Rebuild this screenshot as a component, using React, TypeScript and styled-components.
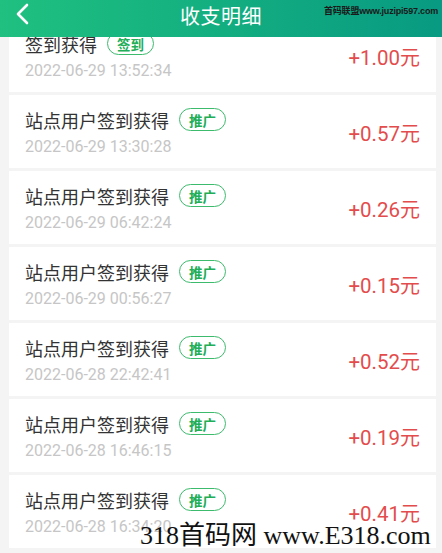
import React from 'react';
import styled, { createGlobalStyle } from 'styled-components';

const GlobalStyle = createGlobalStyle`
  html, body {
    margin: 0;
    padding: 0;
    background: #f4f4f4;
    font-family: Roboto, "Noto Sans CJK SC", sans-serif;
  }
`;

const Page = styled.div`
  position: relative;
  width: 442px;
  height: 553px;
  overflow: hidden;
  background: #f4f4f4;
`;

const Header = styled.header`
  position: absolute;
  top: 0;
  left: 0;
  right: 0;
  z-index: 2;
  height: 37px;
  display: flex;
  align-items: center;
  justify-content: center;
  padding-bottom: 7px;
  box-sizing: border-box;
  background: linear-gradient(90deg, #1fc080 0%, #13ae80 50%, #089a82 100%);
`;

const BackButton = styled.div`
  position: absolute;
  left: 14px;
  top: 3px;
  width: 18px;
  height: 22px;
`;

const Title = styled.h1`
  margin: 0;
  color: #fff;
  font-size: 20px;
  font-weight: 400;
  letter-spacing: 0.5px;
  font-family: "Noto Sans CJK SC", sans-serif;
`;

const TopMark = styled.div`
  position: absolute;
  right: 4px;
  top: 4px;
  font-size: 9px;
  color: #1a1a1a;
  font-family: "Liberation Sans", "Noto Sans CJK SC", sans-serif;
  letter-spacing: -0.2px;
  font-weight: 700;
`;

const List = styled.div`
  display: flex;
  flex-direction: column;
  gap: 3px;
  padding: 19px 6px 0 9px;
`;

const Card = styled.div`
  height: 73px;
  box-sizing: border-box;
  background: #fff;
  display: flex;
  justify-content: space-between;
  padding: 13px 16px 0 16px;
`;

const Info = styled.div`
  display: flex;
  flex-direction: column;
`;

const NameRow = styled.div`
  display: flex;
  align-items: center;
  height: 23px;
  gap: 10px;
`;

const Name = styled.span`
  font-size: 18px;
  color: #333;
  font-family: "Noto Sans CJK SC", sans-serif;
`;

const Tag = styled.span`
  height: 23px;
  box-sizing: border-box;
  padding: 0 9px;
  border: 1.5px solid #3dbb6c;
  border-radius: 12px;
  color: #22ad57;
  font-size: 13.5px;
  font-weight: 700;
  display: flex;
  align-items: center;
  font-family: "Noto Sans CJK SC", sans-serif;
`;

const Time = styled.span`
  margin-top: 5px;
  line-height: 22px;
  font-size: 16px;
  color: #c6c6c6;
`;

const Amount = styled.span`
  align-self: center;
  margin-top: -11px;
  font-size: 20.5px;
  color: #e34c4c;
`;

const Yuan = styled.span`
  font-family: "Noto Sans CJK SC", sans-serif;
  font-size: 20px;
`;

const BottomMark = styled.div`
  position: absolute;
  left: 140px;
  top: 521px;
  z-index: 3;
  font-family: "Liberation Serif", "Noto Sans CJK SC", serif;
  font-size: 26px;
  color: #111;
  white-space: nowrap;
  line-height: 30px;
`;

type Row = { name: string; tag: string; time: string; amount: string };

const rows: Row[] = [
  { name: '签到获得', tag: '签到', time: '2022-06-29 13:52:34', amount: '+1.00' },
  { name: '站点用户签到获得', tag: '推广', time: '2022-06-29 13:30:28', amount: '+0.57' },
  { name: '站点用户签到获得', tag: '推广', time: '2022-06-29 06:42:24', amount: '+0.26' },
  { name: '站点用户签到获得', tag: '推广', time: '2022-06-29 00:56:27', amount: '+0.15' },
  { name: '站点用户签到获得', tag: '推广', time: '2022-06-28 22:42:41', amount: '+0.52' },
  { name: '站点用户签到获得', tag: '推广', time: '2022-06-28 16:46:15', amount: '+0.19' },
  { name: '站点用户签到获得', tag: '推广', time: '2022-06-28 16:34:20', amount: '+0.41' },
];

export default function App() {
  return (
    <Page>
      <GlobalStyle />
      <Header>
        <BackButton>
          <svg width="18" height="22" viewBox="0 0 18 22">
            <polyline
              points="13,2 4,11 13,20"
              fill="none"
              stroke="#fff"
              strokeWidth="2.6"
              strokeLinecap="round"
              strokeLinejoin="round"
            />
          </svg>
        </BackButton>
        <Title>收支明细</Title>
        <TopMark>首码联盟www.juzipi597.com</TopMark>
      </Header>
      <List>
        {rows.map((r, i) => (
          <Card key={i}>
            <Info>
              <NameRow>
                <Name>{r.name}</Name>
                <Tag>{r.tag}</Tag>
              </NameRow>
              <Time>{r.time}</Time>
            </Info>
            <Amount>
              {r.amount}
              <Yuan>元</Yuan>
            </Amount>
          </Card>
        ))}
      </List>
      <BottomMark>318首码网 www.E318.com</BottomMark>
    </Page>
  );
}
